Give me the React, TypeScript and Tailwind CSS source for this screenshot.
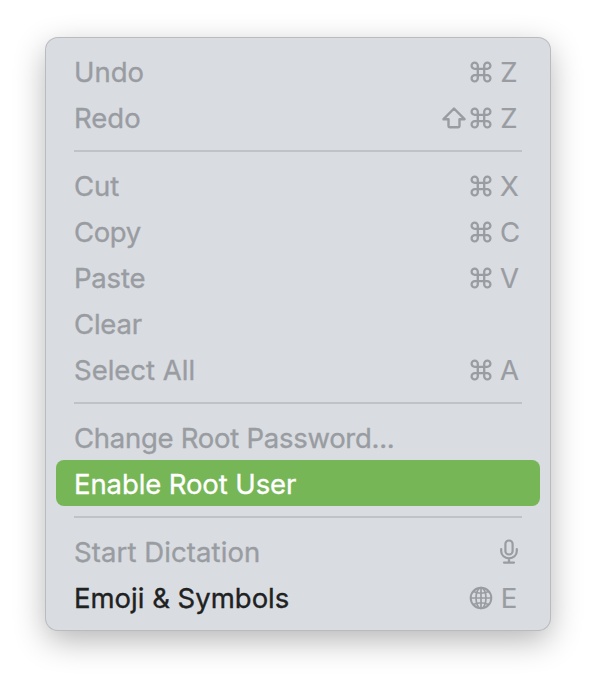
import clsx from 'clsx';

type Item = {
  label: string;
  keys?: string;
  shift?: boolean;
  icon?: 'command' | 'mic' | 'globe';
  active?: boolean;
  enabled?: boolean;
  tracking?: string;
};

const groups: Item[][] = [
  [
    { label: 'Undo', icon: 'command', keys: 'Z' },
    { label: 'Redo', icon: 'command', keys: 'Z', shift: true },
  ],
  [
    { label: 'Cut', icon: 'command', keys: 'X' },
    { label: 'Copy', icon: 'command', keys: 'C', tracking: 'tracking-[-0.4px]' },
    { label: 'Paste', icon: 'command', keys: 'V', tracking: 'tracking-[-0.2px]' },
    { label: 'Clear', tracking: 'tracking-[-0.2px]' },
    { label: 'Select All', icon: 'command', keys: 'A' },
  ],
  [
    { label: 'Change Root Password...', tracking: 'tracking-[-0.27px]' },
    { label: 'Enable Root User', active: true, tracking: 'tracking-[-0.1px]' },
  ],
  [
    { label: 'Start Dictation', icon: 'mic', tracking: 'tracking-[0.1px]' },
    { label: 'Emoji & Symbols', icon: 'globe', keys: 'E', enabled: true },
  ],
];

function CommandIcon() {
  return (
    <svg width="22" height="22" viewBox="0 0 22 22" fill="none" stroke="currentColor" strokeWidth="2.3">
      <path d="M7.8 7.8H4.8A3.1 3.1 0 1 1 7.8 4.7V17.3A3.1 3.1 0 1 1 4.8 14.2H17.2A3.1 3.1 0 1 1 14.2 17.3V4.7A3.1 3.1 0 1 1 17.2 7.8Z" />
    </svg>
  );
}

function ShiftIcon() {
  return (
    <svg width="24" height="22" viewBox="0 0 24 22" className="mr-[4px]" fill="none" stroke="currentColor" strokeWidth="2.4" strokeLinejoin="round">
      <path d="M12 1.5L22.5 12.2H17.5V19Q17.5 20.2 16.3 20.2H7.7Q6.5 20.2 6.5 19V12.2H1.5Z" />
    </svg>
  );
}

function MicIcon() {
  return (
    <svg width="20" height="26" viewBox="0 0 20 26" fill="none" stroke="currentColor" strokeWidth="2.2" strokeLinecap="round">
      <rect x="6.4" y="1.5" width="7.2" height="14" rx="3.6" />
      <path d="M2.2 10V12.2A7.8 7.2 0 0 0 17.8 12.2V10M10 19.5V23.6M5 23.6H15" />
    </svg>
  );
}

function GlobeIcon() {
  return (
    <svg width="24" height="24" viewBox="0 0 24 24" className="mr-[-1px]" fill="none" stroke="currentColor" strokeWidth="1.7">
      <circle cx="12" cy="12" r="10.3" strokeWidth="2" />
      <ellipse cx="12" cy="12" rx="5" ry="10.3" />
      <path d="M12 1.5V22.5M1.5 12H22.5M4.3 5.5Q12 9 19.7 5.5M4.3 18.5Q12 15 19.7 18.5" />
    </svg>
  );
}

function MenuItem({ item }: { item: Item }) {
  return (
    <div
      className={clsx(
        'flex h-[46px] items-center justify-between rounded-[8px] pl-[18px] pr-[21px]',
        item.active ? 'bg-[#76b657] text-white' : item.enabled ? 'text-[#202121]' : 'text-[#999ca1]'
      )}
    >
      <span className={clsx('whitespace-nowrap pt-[2px] [-webkit-text-stroke:0.35px_currentColor]', item.tracking)}>{item.label}</span>
      <span className="flex items-center pt-px text-[#999ca1]">
        {item.shift && <ShiftIcon />}
        {item.icon === 'command' && <CommandIcon />}
        {item.icon === 'mic' && <MicIcon />}
        {item.icon === 'globe' && <GlobeIcon />}
        {item.keys && <span className="ml-[8px] mr-px w-[18px] pt-px text-center [-webkit-text-stroke:0.2px_currentColor]">{item.keys}</span>}
      </span>
    </div>
  );
}

export default function App() {
  return (
    <div className="h-[684px] w-[596px] bg-white pl-[46px] pt-[38px] font-['Inter',sans-serif] text-[27.5px] leading-[40px]">
      <div className="h-[592px] w-[504px] rounded-[12px] bg-[#d9dce1] px-[10px] pt-[10px] shadow-[0_0_0_1px_#b9bbbf,0_10px_32px_rgba(0,0,0,0.3)]">
        {groups.map((group, i) => (
          <div key={i}>
            {i > 0 && <div className="mx-[18px] my-[10px] h-[2px] bg-[#bfc2c6]" />}
            {group.map((item) => (
              <MenuItem key={item.label} item={item} />
            ))}
          </div>
        ))}
      </div>
    </div>
  );
}
